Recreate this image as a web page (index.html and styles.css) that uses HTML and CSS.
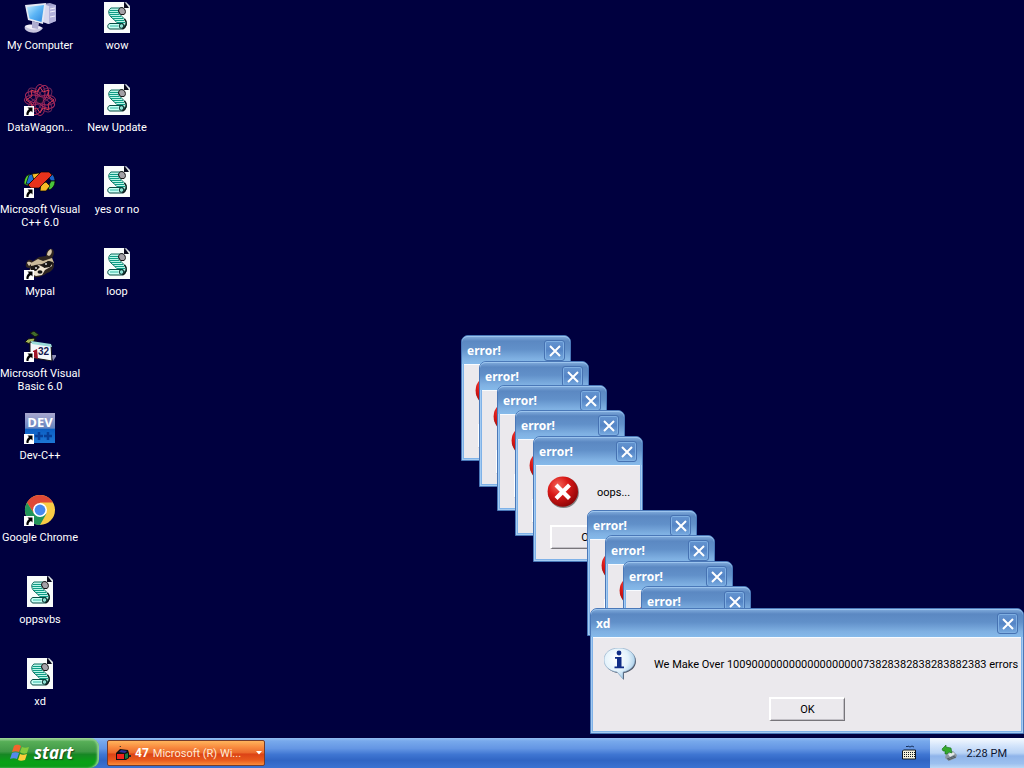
FILE: index.html
```html
<!DOCTYPE html>
<html lang="en">
<head>
<meta charset="utf-8">
<title>Desktop</title>
<link rel="stylesheet" href="styles.css">
</head>
<body>
<svg class="defs" aria-hidden="true">
  <defs>
    <linearGradient id="screen" x1="0" y1="0" x2="1" y2="1"><stop offset="0" stop-color="#c3ecff"/><stop offset=".5" stop-color="#5cb5f5"/><stop offset="1" stop-color="#2c86dc"/></linearGradient>
    <radialGradient id="red" cx=".35" cy=".3" r=".75"><stop offset="0" stop-color="#f4685c"/><stop offset=".45" stop-color="#da1a18"/><stop offset="1" stop-color="#8c0507"/></radialGradient>
    <radialGradient id="bubble" cx=".4" cy=".35" r=".7"><stop offset="0" stop-color="#fff"/><stop offset=".55" stop-color="#e3f2fb"/><stop offset="1" stop-color="#98c3e4"/></radialGradient>
    <linearGradient id="dev" x1="0" y1="0" x2="0" y2="1"><stop offset="0" stop-color="#a9a7cf"/><stop offset=".5" stop-color="#6785c0"/><stop offset=".55" stop-color="#0c5fc4"/><stop offset="1" stop-color="#1d77d4"/></linearGradient>
  </defs>
  <symbol id="arrow" viewBox="0 0 10 10"><path fill="#fff" d="M0 0h10v10H0z"/><path d="M3.5 1.500H8.500V6.500L7 5C5 6 4.500 7 4.500 9H2.500C2 6.500 3.200 4.500 5 3z"/></symbol>
  <symbol id="script" viewBox="0 0 32 32">
    <path d="M3 0h20l6 6v25H3z" fill="#f9fcfb"/><path d="M23 0v6h6z" fill="#0a0a1c"/><path d="M24 0h1l4 4v2h-1z" fill="#dfe6e6"/>
    <path d="M10 6h12l-3 2c-2 1-2 3 0 4.500l4.500 4.500c3 3 2.500 8-1.500 9.500l-6-4c1-1 0-2-1-3l-5-4.500c-3-3-3-7 0-9z" fill="#b9f6e8" stroke="#0d6e60"/>
    <path d="M9 8.500h9M8 10.500h9M9 12.500h9M10 14.500h10M12 16.500h10M14 18.500h9M16 20.500h8" stroke="#0f9c86" stroke-width="1.100"/>
    <path d="M18 7c1-2 5-2 6 1 1 2 0 4-1 4.500h-3.500L17.500 9z" fill="#a3a0a6" stroke="#161616"/>
    <path d="M9 21.500h12c3 0 3.500 5 0 5.500H9c-3-.5-3-5 0-5.500z" fill="#c8fff4" stroke="#064a43"/>
    <circle cx="20.500" cy="24" r="2.300" fill="#8ce0d2" stroke="#052b28"/><path d="M23.500 17c3 3 2 8-2 10" fill="none" stroke="#0b1a1a" stroke-width="1.500"/><path d="M9 24h8" stroke="#35b6a4"/>
  </symbol>
  <symbol id="error" viewBox="0 0 32 32"><circle cx="16.500" cy="16.500" r="15.400" fill="#555" opacity=".7"/><circle cx="15.800" cy="15.600" r="15.200" fill="url(#red)"/><path d="M10.500 10.500l10.500 10.500M21 10.500L10.500 21" stroke="#fff" stroke-width="4.200" stroke-linecap="square"/></symbol>
  <symbol id="cross" viewBox="0 0 12 12"><path d="M1 1l10 10M11 1L1 11" stroke="#fff" stroke-width="2"/></symbol>
</svg>

<main class="desktop">
  <ul class="icons">
    <li><a class="shortcut" href="#"><svg viewBox="0 0 32 32"><path d="M19 2l7-1 6 2v16l-8 3-5-2z" fill="#9f9fca"/><path d="M19 2l6 2v18l-6-2z" fill="#d9d8ee"/><path d="M25 4l7-1v16l-7 3z" fill="#b4b3dc"/><path d="M26 7l5-1M26 10l5-1M26 15l5-1" stroke="#f2f1fa"/><path d="M1 24c6-2 14-1 18 2-3 5-11 6-16 3-2-1-3-3-2-5z" fill="#c7c5de"/><path d="M1 24c6-3 12-1 17 2-6 2-12 2-16-1z" fill="#f1eff8"/><path d="M8 19l7 2-1 6-6-1z" fill="#aeadd0"/><path d="M1 3l21-2-3 21L4 18z" fill="#e4e9f4"/><path d="M3 5l17-2-2.500 17L5.500 16.500z" fill="url(#screen)"/></svg><span>My Computer</span></a></li>
    <li><a class="shortcut" href="#"><svg viewBox="0 0 32 32"><g fill="none" stroke="#a8285c" stroke-width="1"><g id="petals"><ellipse cx="16" cy="9" rx="5" ry="8.500"/><ellipse cx="16" cy="23" rx="5" ry="8.500"/><ellipse cx="9" cy="16" rx="8.500" ry="5"/><ellipse cx="23" cy="16" rx="8.500" ry="5"/></g><use href="#petals" transform="rotate(45 16 16)" stroke="#6e265a"/><use href="#petals" transform="rotate(22 16 16)"/><path d="M16 3l3 5 6-2-1 6 6 4-6 4 1 6-6-2-3 5-3-5-6 2 1-6-6-4 6-4-1-6 6 2z" stroke="#d43a52"/></g><circle cx="16" cy="16" r="3" fill="#10072f"/><use href="#arrow" y="22" width="10" height="10"/></svg><span>DataWagon...</span></a></li>
    <li><a class="shortcut" href="#"><svg viewBox="0 0 32 32"><g stroke="#000" stroke-width=".7"><path d="M0 18c0-6 3-10 7-10l-2 6-1 6z" fill="#55d431"/><path d="M5 9l6-2-1 6-5 5H2z" fill="#1e70d2"/><path d="M8 8l7-1 3 5-7 5z" fill="#f7bb28"/><path d="M24 6c4 1 7 4 7 9h-4l-4-6z" fill="#1c62c8"/><path d="M27 15h4c0 5-3 8-6 9l-1-3z" fill="#4ac43a"/><path d="M17 18l5-2 4 4-4 5h-6z" fill="#f6ba26"/><path d="M17 6h8l3 3-13 13H7l-3-3z" fill="#e8321c"/></g><use href="#arrow" y="22" width="10" height="10"/></svg><span>Microsoft Visual<br>C++ 6.0</span></a></li>
    <li><a class="shortcut" href="#"><svg viewBox="0 0 32 32"><path d="M2 16c1-5 4-5 7-3l6-4 7-1c0-5 3-8 6-7 3 2 2 6 0 9 4 7 2 13-5 15-4 3-9 5-13 4-6 0-6-5-4-9-3 0-5-1-4-4z" fill="#2e2520"/><path d="M3 15c1-2 3-1 5 0l-3 3zM23 7c0-3 2-5 4-6 2 3 0 6-2 7z" fill="#d6c5aa"/><path d="M7 15l7-4 5 2 9-3 2 5-5-2-7 3-7 1-4 3z" fill="#cbbb9b"/><path d="M7 20l8-3 4 2 8-4 1 3-7 4-3 5-6 1-7-3z" fill="#eee3cf"/><path d="M7 18l6-1 3 2-4 4-5-1zM18 17l6-4 5 1-3 5-6 1z" fill="#1a1714"/><circle cx="12" cy="20" r="1" fill="#ddd"/><circle cx="22" cy="16" r="1" fill="#ddd"/><ellipse cx="16" cy="24" rx="2.500" ry="1.800" fill="#111"/><use href="#arrow" y="22" width="10" height="10"/></svg><span>Mypal</span></a></li>
    <li><a class="shortcut" href="#"><svg viewBox="0 0 32 32"><path d="M6 3l4-2 5 4-4 2z" fill="#416b2b" stroke="#111"/><path d="M1 12l3-3 6-1 1 2-5 4z" fill="#a2b257" stroke="#111"/><path d="M11 6l2 8" stroke="#111"/><path d="M27 25h6l-4 6z" fill="#8d8db2"/><path d="M6 12l21 3 1 16-18-3-4-6z" fill="#f4f7fa" stroke="#111"/><path d="M7 11l20 3 1 3-20-3z" fill="#9adbd9"/><path d="M9 21l4-2 1 10-5-2z" fill="#9f1426"/><text x="14" y="25" class="badge-number">32</text><use href="#arrow" y="22" width="10" height="10"/></svg><span>Microsoft Visual<br>Basic 6.0</span></a></li>
    <li><a class="shortcut" href="#"><svg viewBox="0 0 32 32"><path d="M1 1h30v30H1z" fill="url(#dev)"/><path d="M11 24h8M15 20v8M20 24h8M24 20v8" stroke="#073f98" stroke-width="2.500"/><text x="16" y="15" class="dev-label">DEV</text><use href="#arrow" y="22" width="10" height="10"/></svg><span>Dev-C++</span></a></li>
    <li><a class="shortcut" href="#"><svg viewBox="0 0 32 32"><circle cx="16" cy="16" r="15" fill="#f9cc45"/><path d="M3 8.500a15 15 0 0 1 26 0H16l-6 11z" fill="#df4936"/><path d="M3 8.500a15 15 0 0 0 13 22.500l6.500-11.500H10z" fill="#21945a"/><circle cx="16" cy="16" r="7" fill="#fff"/><circle cx="16" cy="16" r="5.400" fill="#4689ee"/><use href="#arrow" y="22" width="10" height="10"/></svg><span>Google Chrome</span></a></li>
    <li><a class="shortcut" href="#"><svg><use href="#script"/></svg><span>oppsvbs</span></a></li>
    <li><a class="shortcut" href="#"><svg><use href="#script"/></svg><span>xd</span></a></li>
  </ul>
  <ul class="icons">
    <li><a class="shortcut" href="#"><svg><use href="#script"/></svg><span>wow</span></a></li>
    <li><a class="shortcut" href="#"><svg><use href="#script"/></svg><span>New Update</span></a></li>
    <li><a class="shortcut" href="#"><svg><use href="#script"/></svg><span>yes or no</span></a></li>
    <li><a class="shortcut" href="#"><svg><use href="#script"/></svg><span>loop</span></a></li>
  </ul>

  <section class="window at-1"><header class="titlebar"><h2>error!</h2><button class="close" aria-label="Close"><svg><use href="#cross"/></svg></button></header><div class="pane"><div class="message"><svg><use href="#error"/></svg></div><button class="ok" aria-label="OK"></button></div></section>
  <section class="window at-2"><header class="titlebar"><h2>error!</h2><button class="close" aria-label="Close"><svg><use href="#cross"/></svg></button></header><div class="pane"><div class="message"><svg><use href="#error"/></svg></div><button class="ok" aria-label="OK"></button></div></section>
  <section class="window at-3"><header class="titlebar"><h2>error!</h2><button class="close" aria-label="Close"><svg><use href="#cross"/></svg></button></header><div class="pane"><div class="message"><svg><use href="#error"/></svg></div><button class="ok" aria-label="OK"></button></div></section>
  <section class="window at-4"><header class="titlebar"><h2>error!</h2><button class="close" aria-label="Close"><svg><use href="#cross"/></svg></button></header><div class="pane"><div class="message"><svg><use href="#error"/></svg></div><button class="ok" aria-label="OK"></button></div></section>
  <section class="window at-5"><header class="titlebar"><h2>error!</h2><button class="close" aria-label="Close"><svg><use href="#cross"/></svg></button></header><div class="pane"><div class="message"><svg><use href="#error"/></svg><p>oops...</p></div><button class="ok">OK</button></div></section>
  <section class="window at-6"><header class="titlebar"><h2>error!</h2><button class="close" aria-label="Close"><svg><use href="#cross"/></svg></button></header><div class="pane"><div class="message"><svg><use href="#error"/></svg></div><button class="ok" aria-label="OK"></button></div></section>
  <section class="window at-7"><header class="titlebar"><h2>error!</h2><button class="close" aria-label="Close"><svg><use href="#cross"/></svg></button></header><div class="pane"><div class="message"><svg><use href="#error"/></svg></div><button class="ok" aria-label="OK"></button></div></section>
  <section class="window at-8"><header class="titlebar"><h2>error!</h2><button class="close" aria-label="Close"><svg><use href="#cross"/></svg></button></header><div class="pane"><div class="message"><svg><use href="#error"/></svg></div><button class="ok" aria-label="OK"></button></div></section>
  <section class="window at-9"><header class="titlebar"><h2>error!</h2><button class="close" aria-label="Close"><svg><use href="#cross"/></svg></button></header><div class="pane"><div class="message"><svg><use href="#error"/></svg></div><button class="ok" aria-label="OK"></button></div></section>

  <section class="window info-window">
    <header class="titlebar"><h2>xd</h2><button class="close" aria-label="Close"><svg><use href="#cross"/></svg></button></header>
    <div class="pane">
      <div class="message">
        <svg viewBox="0 0 32 32"><path d="M16 1C7 1 1 6 1 13c0 6 5 11 13 12l6 7v-7c7-1 12-6 12-12C32 6 25 1 16 1z" fill="#4b5365"/><path d="M15 0C6 0 0 5 0 12c0 6 5 11 13 12l6 7v-7c7-1 12-6 12-12C31 5 24 0 15 0z" fill="url(#bubble)" stroke="#88a9c8" stroke-width=".6"/><circle cx="15" cy="5" r="2.400" fill="#102d86"/><path d="M11 9h6.500v9.500H20v1.800h-9.500v-1.800H13v-7.700h-2z" fill="#102d86"/></svg>
        <p>We Make Over 100900000000000000000073828382838283882383 errors</p>
      </div>
      <button class="ok">OK</button>
    </div>
  </section>
</main>

<footer class="taskbar">
  <button class="start"><svg viewBox="0 0 20 18"><path d="M4 2c3-2 5-1 7 0L9 8C7 7 4 7 2 8z" fill="#f2652c"/><path d="M12 3c2 1 4 1 7 0l-2 6c-2 1-5 1-7-1z" fill="#84cb3e"/><path d="M2 9c2-1 5-1 7 0l-2 6c-2-1-5-1-7 0z" fill="#5489eb"/><path d="M10 10c2 1 4 1 7 0l-2 6c-3 1-5 1-7 0z" fill="#fccd3b"/></svg>start</button>
  <button class="task"><svg viewBox="0 0 16 16"><path d="M1 8l4-4 8 1 1 3v5l-3 2H1z" fill="#111"/><path d="M2 9h7v5H2z" fill="#ee221c"/><path d="M4 7l2-2 6 1-2 2z" fill="#2a309b"/><path d="M10 9l3-1v5l-3 1z" fill="#177943"/><path d="M4 1h2v1M14 10h2v2h-2z" fill="#222"/></svg><b>47</b><span class="task-name">Microsoft (R) Wi...</span><svg class="caret" viewBox="0 0 6 4"><path d="M0 0h6L3 3.500z" fill="#fff"/></svg></button>
  <svg class="keyboard" viewBox="0 0 16 16"><path d="M5 1l1 1 1-1 2 1 2-1 2 1" fill="none" stroke="#17325e"/><path d="M2.500 5h12v9h-13V6z" fill="#f3f1dc" stroke="#101820"/><path d="M3 7.500h11M3 9.500h11M3 11.500h11" stroke="#101820" stroke-dasharray="1 1"/></svg>
  <div class="tray"><svg viewBox="0 0 16 16"><path d="M5 9l7-3 4 4-1 3-7 3-4-3z" fill="#8c98a2"/><path d="M7 9l5-2 2 2-5 3z" fill="#e3e8e9"/><path d="M6 14l8-3M7 15l8-3" stroke="#3f4b54" stroke-width=".8"/><path d="M1 4l4-4v2l5 1 1 5-3-1-2 2H4V6H2z" fill="#35a92c" stroke="#176d20" stroke-width=".6"/></svg><time>2:28 PM</time></div>
</footer>
</body>
</html>
```
FILE: styles.css
```css
* { box-sizing: border-box; }

body {
  display: flex;
  flex-direction: column;
  min-height: 100vh;
  margin: 0;
  overflow: hidden;
  background: #00003f;
  font: 11px/13px Roboto, "Noto Sans", sans-serif;
}

h2, p, ul { margin: 0; padding: 0; }
button { font: inherit; padding: 0; cursor: pointer; }
svg { display: block; flex: none; }
.defs { position: absolute; width: 0; height: 0; }

.desktop {
  position: relative;
  display: flex;
  flex: 1;
  align-items: flex-start;
}

.icons {
  display: grid;
  grid-auto-rows: 82px;
  width: 78px;
  list-style: none;
}

.shortcut {
  display: flex;
  flex-direction: column;
  align-items: center;
  gap: 5px;
  padding-top: 2px;
  color: #fff;
  text-align: center;
  text-decoration: none;
  white-space: nowrap;
}
.shortcut svg { width: 32px; height: 32px; }
.badge-number { font: bold 10px "Liberation Sans", sans-serif; fill: #15184d; }
.dev-label { font: bold 13px "Open Sans", sans-serif; fill: #fff; text-anchor: middle; }

.window {
  position: absolute;
  display: flex;
  flex-direction: column;
  width: 110px;
  height: 126px;
  border: 1px solid #4a78b8;
  border-radius: 7px 7px 0 0;
  background: #7fb2e8;
  box-shadow: inset 1px 1px #a4cbf2, inset -1px -1px #a4cbf2;
}
.at-1 { left: 461px; top: 335px; }
.at-2 { left: 479px; top: 361px; }
.at-3 { left: 497px; top: 385px; }
.at-4 { left: 515px; top: 410px; }
.at-5 { left: 533px; top: 436px; }
.at-6 { left: 587px; top: 510px; }
.at-7 { left: 605px; top: 535px; }
.at-8 { left: 623px; top: 561px; }
.at-9 { left: 641px; top: 586px; }
.info-window { left: 590px; top: 608px; width: 434px; }

.titlebar {
  display: flex;
  align-items: center;
  justify-content: space-between;
  height: 28px;
  padding: 0 5px;
  border-top: 1px solid #9cc4ed;
  border-radius: 6px 6px 0 0;
  background: linear-gradient(#7ba6d8, #5b88c2 15%, #6190c9 45%, #7fb0e2 80%, #86baea);
  color: #fff;
}
.titlebar h2 { font: bold 12px/16px "Noto Sans", sans-serif; }

.close {
  display: grid;
  place-items: center;
  width: 21px;
  height: 21px;
  border: 1px solid #4672b2;
  border-radius: 3px;
  background: linear-gradient(#6494d0, #5585c6 50%, #78abe0);
  box-shadow: inset 0 0 0 1px #7fafe2;
}
.close svg { width: 12px; height: 12px; }

.pane {
  display: flex;
  flex: 1;
  flex-direction: column;
  align-items: center;
  gap: 17px;
  margin: 0 2px 2px;
  padding: 10px 11px 0;
  border-top: 1px solid #f8fbff;
  background: #ebe9ed;
}
.message {
  display: flex;
  align-items: center;
  gap: 18px;
  align-self: stretch;
  white-space: nowrap;
}
.message svg { width: 32px; height: 32px; }

.ok {
  width: 76px;
  height: 24px;
  border: solid;
  border-width: 2px 1px 1px 2px;
  border-color: #fff #77757a #77757a #fff;
  background: #ebe9ed;
  box-shadow: inset -1px -1px #c2c0c6;
}

.taskbar {
  display: flex;
  align-items: center;
  height: 30px;
  background: linear-gradient(#92bdf2, #78a9ec 10%, #6496e4 35%, #3f76d2 55%, #3065c4 75%, #3a72d2);
}
.start {
  display: flex;
  align-items: center;
  gap: 4px;
  align-self: stretch;
  width: 99px;
  padding-left: 10px;
  border: 0;
  border-radius: 0 9px 9px 0;
  background: linear-gradient(#a7dba1, #57ae57 12%, #3f9845 45%, #178724 55%, #08a215 80%, #0c9a1a);
  box-shadow: inset -2px 0 2px #8dce8c;
  color: #fff;
  font: italic bold 17px/20px "Open Sans", sans-serif;
  text-shadow: 1px 1px 1px #174a1c;
}
.start svg { width: 20px; height: 18px; }

.task {
  display: flex;
  align-items: center;
  gap: 4px;
  width: 158px;
  height: 26px;
  margin-left: 8px;
  padding: 0 2px 0 7px;
  border: 1px solid #743c2d;
  border-radius: 2px;
  background: linear-gradient(#ffb35c, #f98c40 25%, #ec6b2c 48%, #dc4316 55%, #e85a1c 80%, #fa8b39);
  color: #ffe9d3;
}
.task svg { width: 16px; height: 16px; }
.task b { color: #fff; font-size: 12px; }
.task .caret { width: 6px; height: 4px; margin-left: auto; }
.keyboard { width: 16px; height: 16px; margin-left: auto; }

.tray {
  display: flex;
  align-items: center;
  align-self: stretch;
  gap: 10px;
  margin-left: 13px;
  padding: 0 17px 0 11px;
  background: linear-gradient(#f5faff, #d4e5fb 25%, #b9d3f5 50%, #8fb4ea 60%, #9cc0ef 85%, #bdd8f6);
  color: #0a1330;
}
.tray svg { width: 16px; height: 16px; }
```
